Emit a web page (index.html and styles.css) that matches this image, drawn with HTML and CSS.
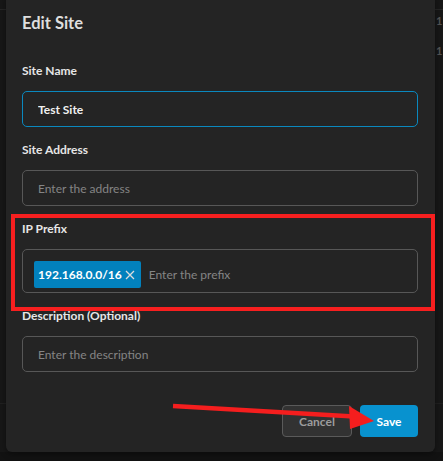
FILE: index.html
```html
<!DOCTYPE html>
<html lang="en">
<head>
    <meta charset="UTF-8">
    <meta name="viewport" content="width=device-width, initial-scale=1.0">
    <title>Sites - Edit Site</title>
    <link rel="stylesheet" href="styles.css">
</head>
<body>
    <!-- Sites table behind the dialog -->
    <div class="page">
        <div class="page-head"></div>
        <div class="row"><span class="cell">1</span></div>
        <div class="row"><span class="cell">1</span></div>
        <div class="page-foot"></div>
    </div>

    <div class="modal">
        <h2>Edit Site</h2>
        <form class="site-form">
            <div class="field">
                <label>Site Name</label>
                <input class="input focused" type="text" value="Test Site">
            </div>
            <div class="field">
                <label>Site Address</label>
                <input class="input" type="text" placeholder="Enter the address">
            </div>
            <div class="field">
                <label>IP Prefix</label>
                <div class="tag-input">
                    <span class="tag">192.168.0.0/16
                        <svg class="tag-remove" width="10" height="10" viewBox="0 0 10 10">
                            <path d="M1 1 L9 9 M9 1 L1 9" stroke="#dcdcdc" stroke-width="1.3" fill="none"/>
                        </svg>
                    </span>
                    <input class="tag-entry" type="text" placeholder="Enter the prefix">
                </div>
            </div>
            <div class="field">
                <label>Description (Optional)</label>
                <input class="input" type="text" placeholder="Enter the description">
            </div>
            <div class="actions">
                <button type="button" class="btn cancel">Cancel</button>
                <button type="button" class="btn save">Save</button>
            </div>
        </form>
    </div>

    <!-- highlight marks -->
    <div class="mark-box"></div>
    <svg class="mark-arrow" width="443" height="461" viewBox="0 0 443 461">
        <line x1="173" y1="406" x2="354" y2="416.5" stroke="#f51e1e" stroke-width="4.5"/>
        <polygon points="349,406 374,421 350,429" fill="#f51e1e"/>
    </svg>
</body>
</html>
```

FILE: styles.css
```css
* {
    box-sizing: border-box;
    margin: 0;
    padding: 0;
}

body {
    font-family: Lato, 'Noto Sans', sans-serif;
    background: #121212;
    width: 443px;
    height: 461px;
    overflow: hidden;
    position: relative;
}

.page {
    background: #171717;
    height: 452px;
}

.page-head {
    height: 10px;
    border-bottom: 1px solid #262626;
}

.row {
    height: 30px;
    padding: 3px 0 0 436px;
    font-size: 11px;
    line-height: 16px;
    font-weight: bold;
    color: #555555;
    white-space: nowrap;
}

.page-foot {
    margin-top: 333px;
    border-top: 1px solid #202020;
}

.modal {
    position: absolute;
    left: 6px;
    top: -10px;
    width: 429px;
    padding: 23px 17px 15px 16px;
    background: #242424;
    border-radius: 6px;
    box-shadow: 0 2px 6px rgba(0, 0, 0, 0.4);
}

.modal h2 {
    font-size: 16.5px;
    line-height: 20px;
    font-weight: bold;
    color: #dedede;
}

.site-form {
    margin-top: 30px;
}

.field + .field {
    margin-top: 15px;
}

.field label {
    display: block;
    font-size: 12px;
    line-height: 16px;
    font-weight: bold;
    color: #e6e6e6;
    margin-bottom: 12px;
}

.input {
    display: block;
    width: 100%;
    height: 36px;
    padding: 0 15px;
    background: transparent;
    border: 1px solid #575757;
    border-radius: 5px;
    font-family: inherit;
    font-size: 12px;
    color: #f0f0f0;
    outline: none;
}

.input.focused {
    border-color: #0a88be;
    font-weight: bold;
}

.input::placeholder,
.tag-entry::placeholder {
    color: #858585;
}

.tag-input {
    display: flex;
    align-items: flex-start;
    height: 44px;
    padding: 11px 15px 0 11px;
    border: 1px solid #575757;
    border-radius: 5px;
}

.tag {
    display: flex;
    align-items: center;
    gap: 3px;
    height: 27px;
    padding: 0 6px 0 4px;
    background: #0281bd;
    border-radius: 2px;
    font-size: 12px;
    font-weight: bold;
    color: #ffffff;
    white-space: nowrap;
}

.tag-remove {
    display: block;
}

.tag-entry {
    flex: 1;
    height: 27px;
    margin-left: 8px;
    background: transparent;
    border: none;
    outline: none;
    font-family: inherit;
    font-size: 12px;
    color: #f0f0f0;
}

.actions {
    display: flex;
    justify-content: flex-end;
    gap: 8px;
    margin-top: 33px;
}

.btn {
    height: 32px;
    border-radius: 4px;
    font-family: inherit;
    font-size: 12px;
    font-weight: bold;
}

.btn.cancel {
    width: 70px;
    background: #323232;
    border: 1px solid #5a5a5a;
    color: #9c9c9c;
}

.btn.save {
    width: 58px;
    background: #0892cf;
    border: none;
    color: #ffffff;
}

.mark-box {
    position: absolute;
    left: 11px;
    top: 214px;
    width: 424px;
    height: 97px;
    border: 4px solid #f71f1f;
}

.mark-arrow {
    position: absolute;
    left: 0;
    top: 0;
}
```
